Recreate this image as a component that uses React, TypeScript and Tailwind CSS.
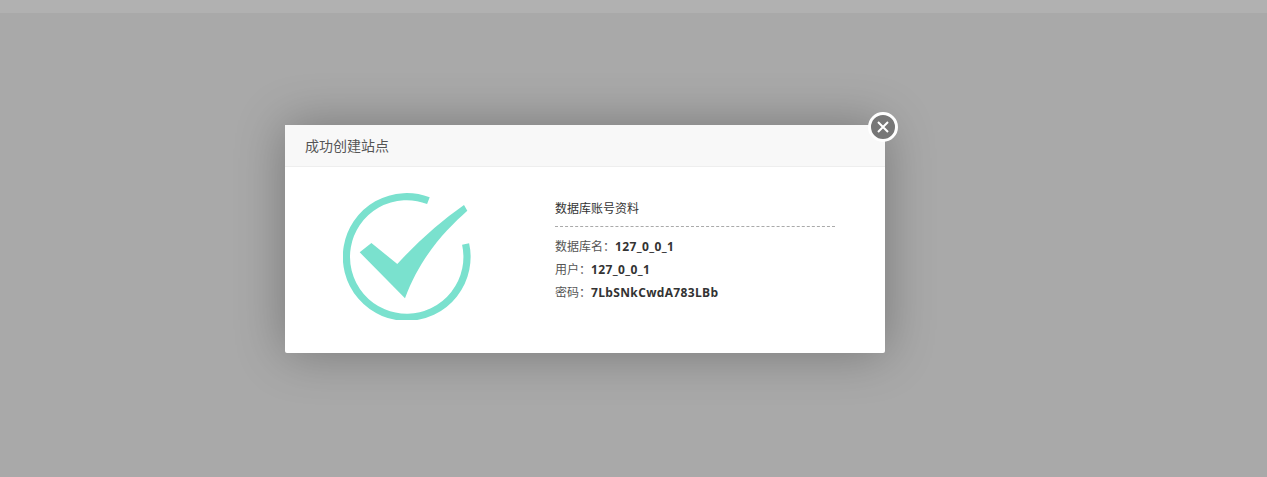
const rows = [
  { label: "数据库名：", value: "127_0_0_1" },
  { label: "用户：", value: "127_0_0_1" },
  { label: "密码：", value: "7LbSNkCwdA783LBb" },
];

function CheckBadge() {
  return (
    <svg width="128" height="127" viewBox="0 0 128 127" className="shrink-0" fill="none">
      <path d="M85.4 7.7A60.3 60.3 0 1 0 122.6 51" stroke="#7AE1CE" strokeWidth="7.2" />
      <path d="M16.7 59.3 28.4 50 54.3 71Q86.4 36 121 12L124.3 17.7C104 36 78 62 62 105.3Z" fill="#7AE1CE" />
    </svg>
  );
}

export default function App() {
  return (
    <div className="h-[477px] w-full overflow-hidden bg-[#a9a9a9] font-['Noto_Sans_CJK_SC',sans-serif]">
      <div className="h-[13px] bg-[#b1b1b1]" />
      <div className="pl-[285px] pt-[112px]">
        <div className="relative w-[600px] h-[228px] bg-white rounded-[2px] shadow-[0_0_50px_rgba(0,0,0,0.3)]">
          <div className="h-[42px] flex items-center px-5 pb-[2px] bg-[#f8f8f8] border-b border-[#eeeeee] text-sm text-[#555555]">
            成功创建站点
          </div>
          <div className="flex">
            <div className="w-[270px] pl-[58px] pt-[26px]">
              <CheckBadge />
            </div>
            <div className="w-[280px] pt-[29px] text-xs text-[#555555]">
              <div className="h-[31px] leading-[23px] text-[#333333] border-b border-dashed border-[#aaaaaa]">
                数据库账号资料
              </div>
              <div className="mt-[7px]">
                {rows.map((r) => (
                  <div key={r.label} className="h-[23px] leading-[23px]">
                    {r.label}
                    <span className="font-['Open_Sans',sans-serif] font-bold tracking-[0.35px] text-[#333333]">{r.value}</span>
                  </div>
                ))}
              </div>
            </div>
          </div>
          <button className="absolute -top-[13px] -right-[13px] w-[30px] h-[30px] rounded-full bg-[#777777] border-[3px] border-white flex items-center justify-center">
            <svg width="12" height="12" viewBox="0 0 12 12" fill="none">
              <path d="M1 1 11 11M11 1 1 11" stroke="#ffffff" strokeWidth="2" />
            </svg>
          </button>
        </div>
      </div>
    </div>
  );
}
